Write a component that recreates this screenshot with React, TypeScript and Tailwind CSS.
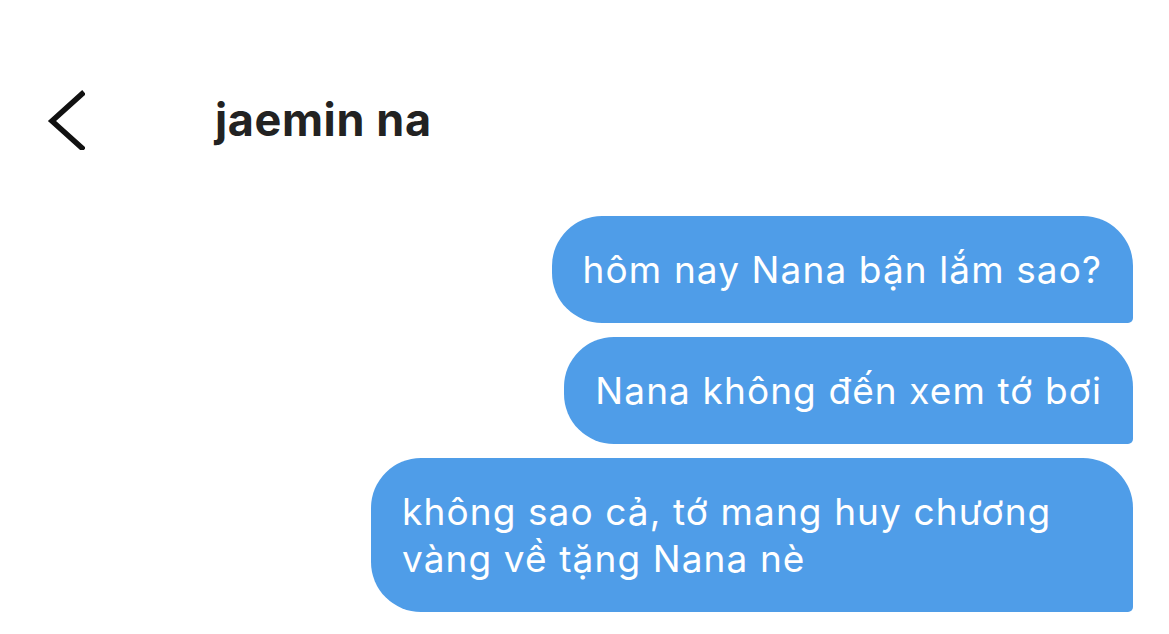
const messages = [
  "hôm nay Nana bận lắm sao?",
  "Nana không đến xem tớ bơi",
  "không sao cả, tớ mang huy chương vàng về tặng Nana nè",
];

const App = () => {
  return (
    <div className="min-h-[634px] w-full bg-white font-['Inter','Noto_Sans',sans-serif]">
      {/* Header */}
      <div className="flex h-[150px] items-end pl-[47px]">
        <div className="flex h-[60px] items-center">
          <svg width="38" height="60" viewBox="0 0 38 60" fill="none" className="shrink-0">
            <path d="M35 4 L5 31 L35 58" stroke="#111" strokeWidth="5.5" strokeLinecap="square" />
          </svg>
          <h1 className="ml-[130px] text-[45px] font-bold tracking-[0.6px] text-[#222]">jaemin na</h1>
        </div>
      </div>

      {/* Messages */}
      <div className="mt-[66px] flex flex-col items-end gap-[14px] pr-[36px]">
        {messages.map((msg, i) => (
          <div
            key={i}
            className="max-w-[762px] rounded-[50px] rounded-br-[5px] bg-[#4f9de8] px-[31px] py-[30px] text-[37px] leading-[47px] tracking-[1.1px] text-white"
          >
            {msg}
          </div>
        ))}
      </div>
    </div>
  );
};

export default App;
